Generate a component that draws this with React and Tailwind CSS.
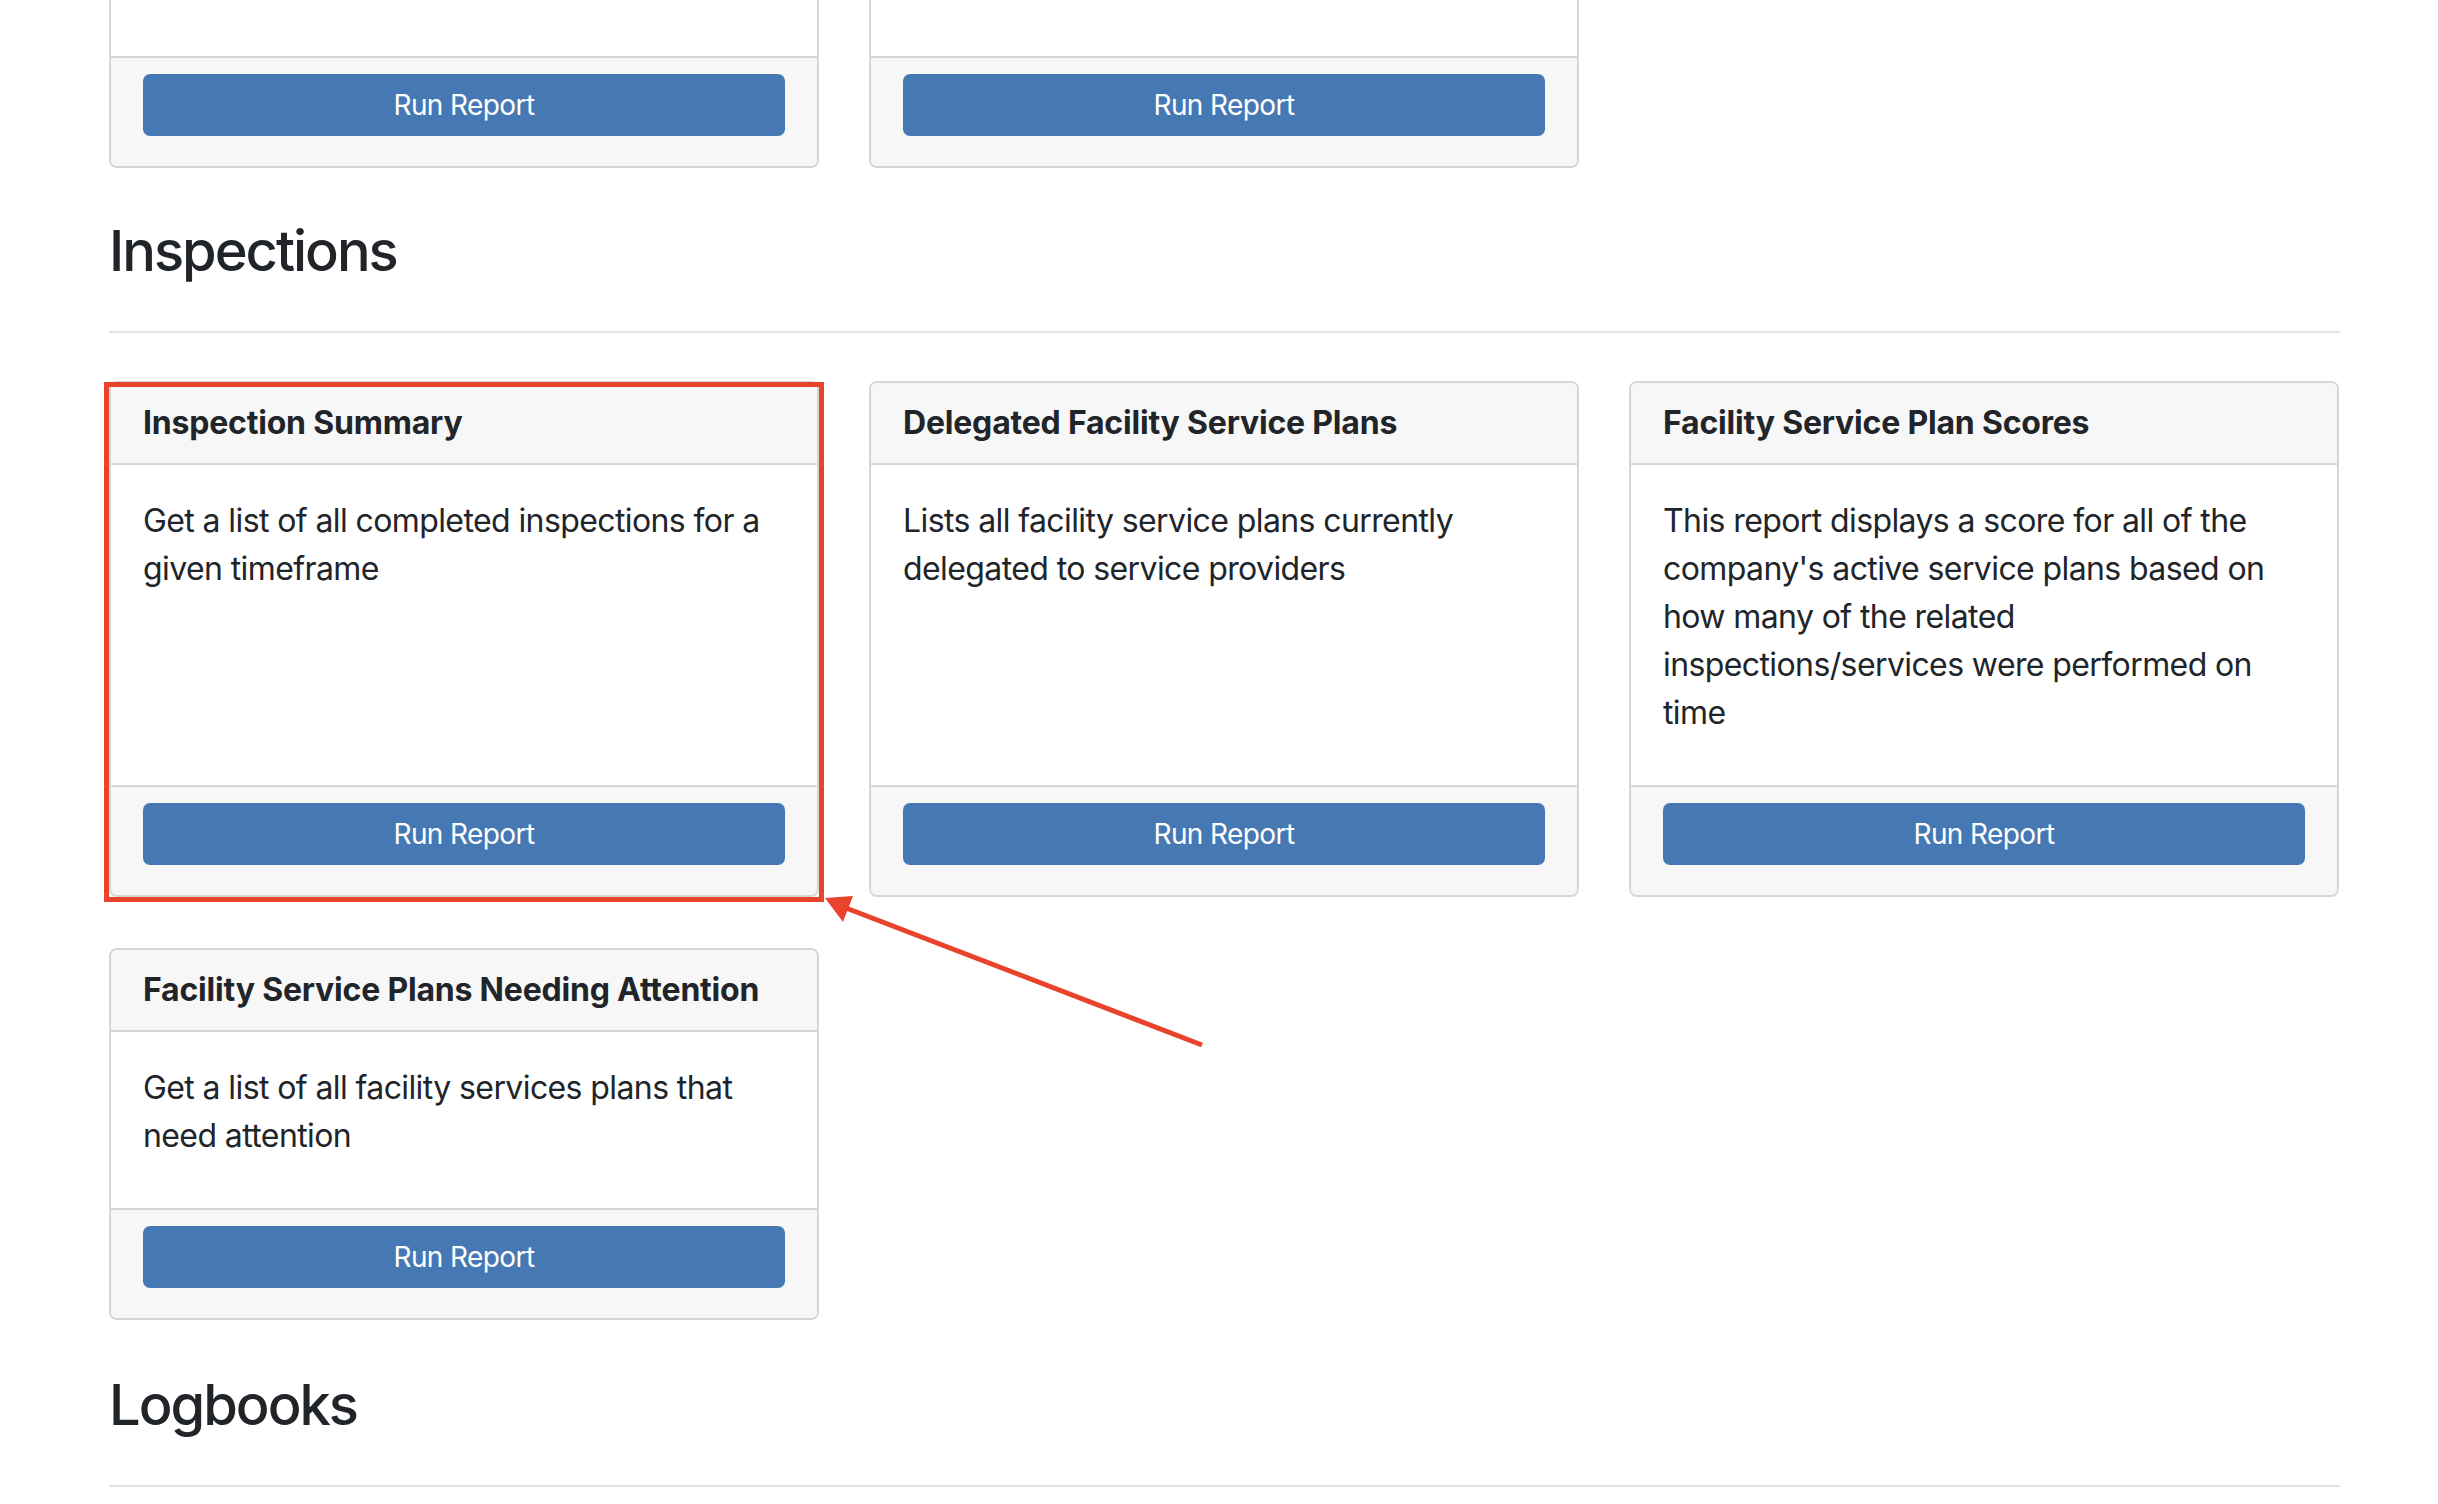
const sections = [
  {
    title: 'Inspections',
    reports: [
      {
        name: 'Inspection Summary',
        description: 'Get a list of all completed inspections for a given timeframe',
        highlighted: true,
      },
      {
        name: 'Delegated Facility Service Plans',
        description: 'Lists all facility service plans currently delegated to service providers',
      },
      {
        name: 'Facility Service Plan Scores',
        description:
          "This report displays a score for all of the company's active service plans based on how many of the related inspections/services were performed on time",
      },
      {
        name: 'Facility Service Plans Needing Attention',
        description: 'Get a list of all facility services plans that need attention',
      },
    ],
  },
];

const RunButton = () => (
  <button
    type="button"
    className="flex h-[62px] w-full items-center justify-center rounded-[7px] bg-[#4679b3] text-[28px] leading-[42px] text-white"
  >
    Run Report
  </button>
);

const ReportCard = ({ report }) => (
  <div className="relative flex flex-col rounded-[8px] border-2 border-[#d6d6d6] bg-white">
    <div className="rounded-t-[6px] border-b-2 border-[#d6d6d6] bg-[#f7f7f7] px-[32px] py-[16px] text-[32px] font-bold leading-[48px] tracking-[-0.2px]">
      {report.name}
    </div>
    <div className="flex-1 px-[32px] pb-[32px] pt-[32px]">
      <p className="mb-[16px] text-[32px] leading-[48px]">{report.description}</p>
    </div>
    <div className="rounded-b-[6px] border-t-2 border-[#d6d6d6] bg-[#f7f7f7] px-[32px] pb-[30px] pt-[16px]">
      <RunButton />
    </div>
    {report.highlighted && (
      <div className="pointer-events-none absolute -bottom-[7px] -left-[7px] -right-[7px] top-[-1px] border-[5px] border-[#e9432b]" />
    )}
  </div>
);

const PartialCard = () => (
  <div className="flex flex-col rounded-b-[8px] border-2 border-t-0 border-[#d6d6d6] bg-white">
    <div className="h-[56px]" />
    <div className="rounded-b-[6px] border-t-2 border-[#d6d6d6] bg-[#f7f7f7] px-[32px] pb-[30px] pt-[16px]">
      <RunButton />
    </div>
  </div>
);

export default function App() {
  return (
    <div className="relative min-h-screen overflow-hidden bg-white font-['Inter','Noto_Sans',sans-serif] tracking-[-0.6px] text-[#212529]">
      <div className="w-[2340px] pl-[109px]">
        <div className="grid grid-cols-[710px_710px_710px] gap-x-[50px]">
          <PartialCard />
          <PartialCard />
        </div>

        {sections.map((section) => (
          <section key={section.title}>
            <h2 className="mt-[50px] text-[56px] font-medium leading-[67px] tracking-[-2px]">{section.title}</h2>
            <hr className="mb-[48px] mt-[46px] border-t-2 border-[#e3e3e3]" />
            <div className="grid grid-cols-[710px_710px_710px] gap-x-[50px] gap-y-[51px]">
              {section.reports.map((report) => (
                <ReportCard key={report.name} report={report} />
              ))}
            </div>
          </section>
        ))}

        <h2 className="mt-[52px] text-[56px] font-medium leading-[67px] tracking-[-2px]">Logbooks</h2>
        <hr className="mt-[46px] border-t-2 border-[#e3e3e3]" />
      </div>

      <svg
        className="pointer-events-none absolute left-0 top-0"
        width="2438"
        height="1504"
        viewBox="0 0 2438 1504"
      >
        <line x1="1202" y1="1045" x2="846" y2="908" stroke="#e9432b" strokeWidth="5" />
        <polygon points="825,898 853,896 843,922" fill="#e9432b" />
      </svg>
    </div>
  );
}
